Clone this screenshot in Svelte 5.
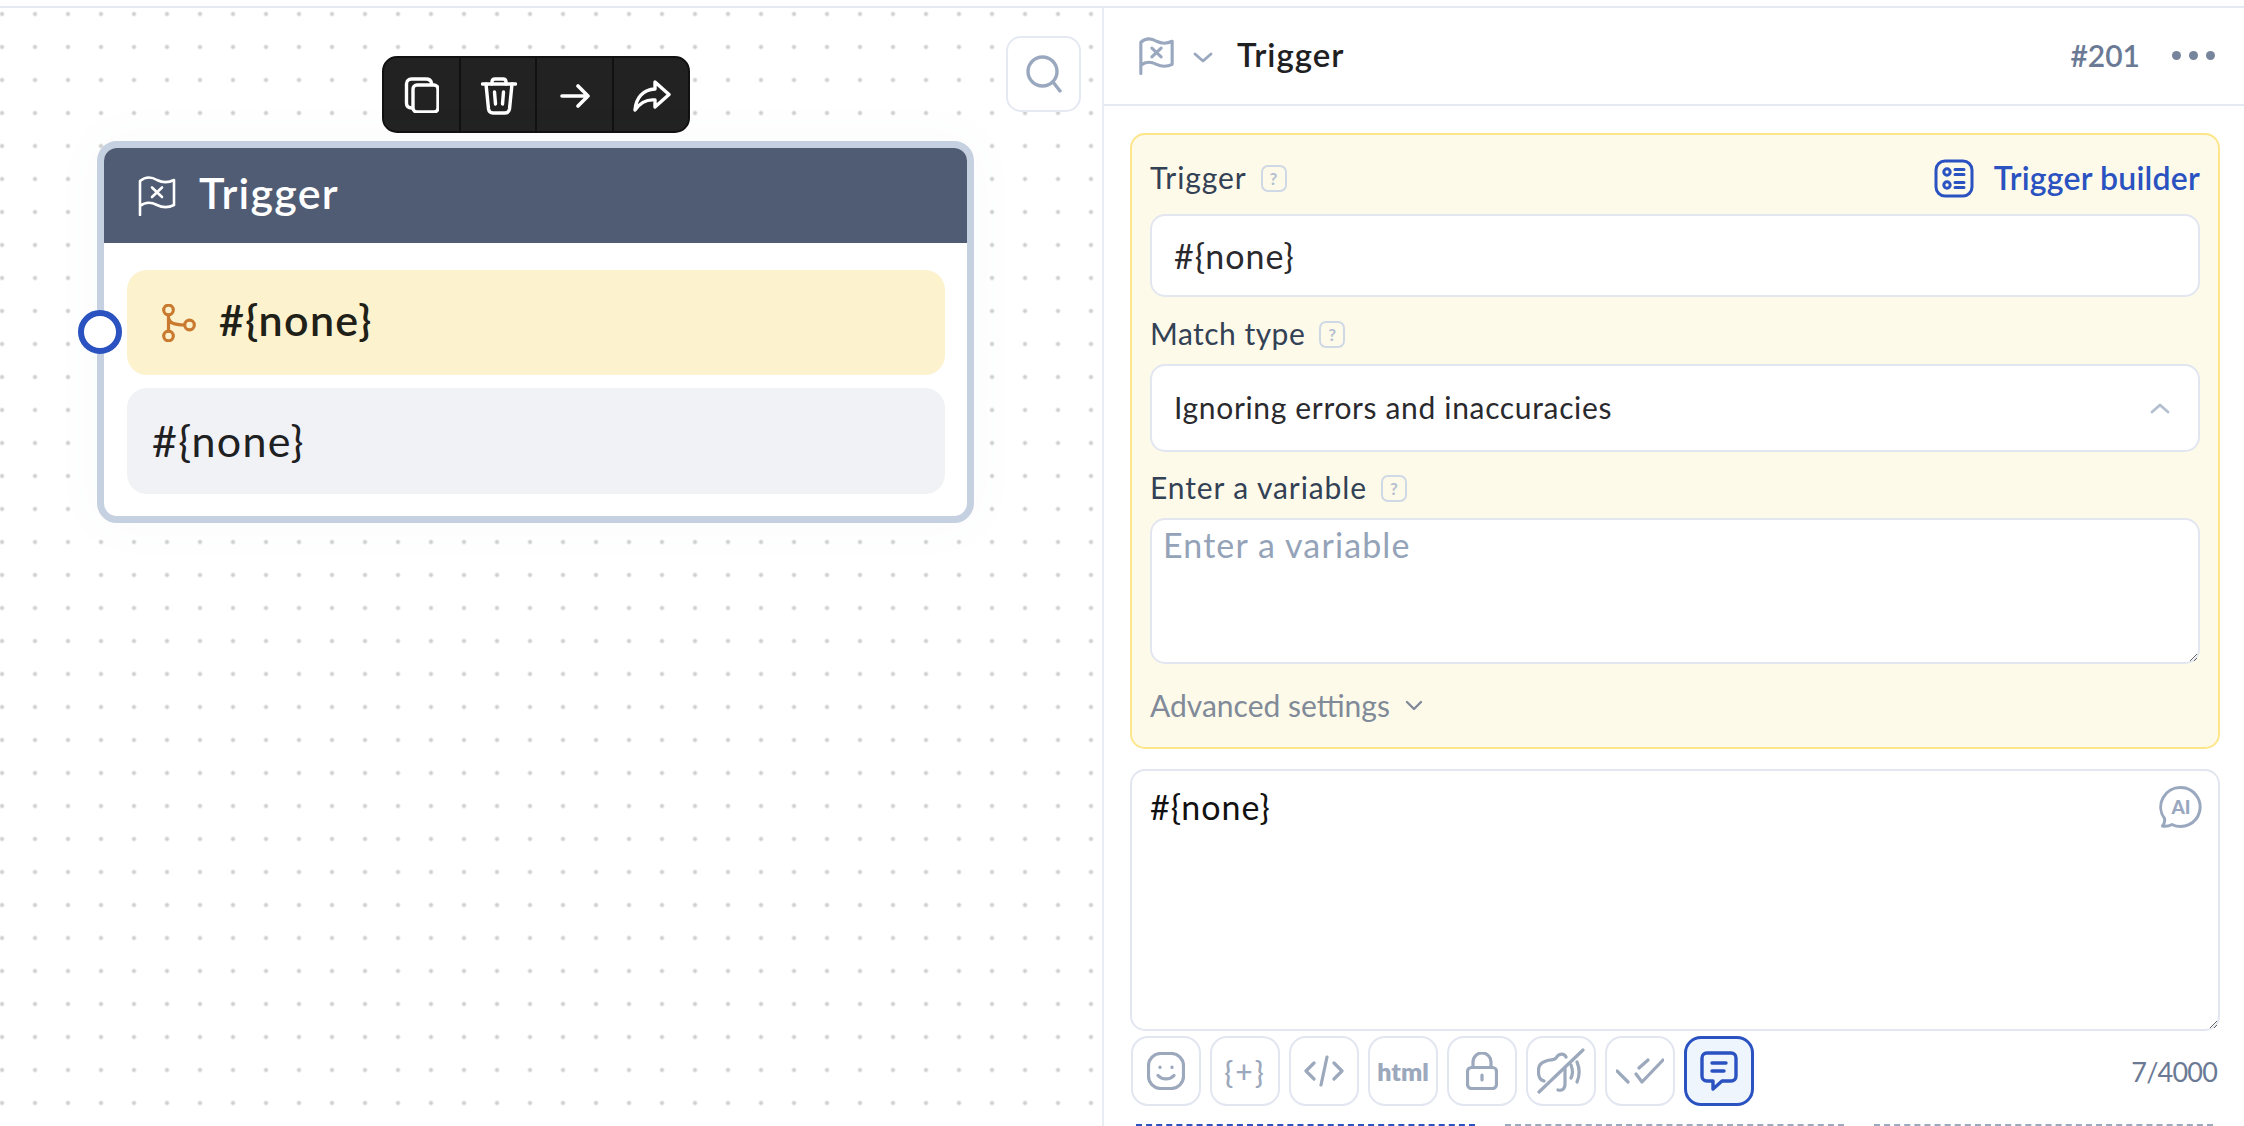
<script>
  const tools = ['copy', 'trash', 'arrow', 'share'];
  const fields = { trigger: '#{none}', match: 'Ignoring errors and inaccuracies', placeholder: 'Enter a variable' };
</script>

{#snippet flag(w, h, sw)}
  <svg width={w} height={h} viewBox="0 0 38 40" fill="none" stroke="currentColor" stroke-width={sw} stroke-linecap="round" stroke-linejoin="round">
    <path d="M2 39V5C8 0 14 1 19 4C25 7 30 7 36 4V29C30 32 25 32 19 29C13 26 7 26 2 30" />
    <path d="M14 11.500L24 21M24 11.500L14 21" />
  </svg>
{/snippet}

{#snippet help()}
  <span class="help">?</span>
{/snippet}

<div class="page">
  <div class="main">
    <section class="canvas">
      <button class="search" aria-label="Search">
        <svg width="36" height="38" viewBox="0 0 36 38" fill="none" stroke="#9aa8bf" stroke-width="3.400" stroke-linecap="round">
          <circle cx="16.500" cy="16.500" r="14.500" />
          <path d="M27 27L34 36" />
        </svg>
      </button>

      <div class="tools">
        {#each tools as t}
          <div class="tool">
            {#if t === 'copy'}
              <svg class="i-copy" width="36" height="36" viewBox="0 0 36 36" fill="none" stroke="#fff" stroke-width="3.400" stroke-linejoin="round" stroke-linecap="round">
                <path d="M9 31C5 31 3.500 29 3.500 26V7C3.500 4 5.500 2 8.500 2H23C26 2 28 3.500 28.500 6" />
                <rect x="10" y="8" width="25" height="27" rx="4" />
              </svg>
            {:else if t === 'trash'}
              <svg class="i-trash" width="36" height="38" viewBox="0 0 36 38" fill="none" stroke="#fff" stroke-width="3.400" stroke-linejoin="round" stroke-linecap="round">
                <path d="M1.500 7H34.500" />
                <path d="M11 7V5C11 3 12.500 2 14 2H22C23.500 2 25 3 25 5V7" />
                <path d="M5 7L7.500 32C8 35 9.500 36 12 36H24C26.500 36 28 35 28.500 32L31 7" />
                <path d="M13.500 15L14.500 27M22.500 15L21.500 27" />
              </svg>
            {:else if t === 'arrow'}
              <svg class="i-arrow" width="30" height="24" viewBox="0 0 30 24" fill="none" stroke="#fff" stroke-width="3.600" stroke-linejoin="round" stroke-linecap="round">
                <path d="M2 12H28M18 2L28 12L18 22" />
              </svg>
            {:else}
              <svg class="i-share" width="38" height="32" viewBox="0 0 38 32" fill="none" stroke="#fff" stroke-width="3.400" stroke-linejoin="round" stroke-linecap="round">
                <path d="M22 2L36 14.500L22 27V20C13 19 7 23 2 30C3 18 10 9.500 22 9Z" />
              </svg>
            {/if}
          </div>
        {/each}
      </div>

      <div class="node">
        <div class="handle"></div>
        <header class="node-head">
          {@render flag(38, 40, 2.600)}
          <span>Trigger</span>
        </header>
        <div class="node-body">
          <div class="row yellow">
            <svg width="34" height="38" viewBox="0 0 34 38" fill="none" stroke="#c97a2e" stroke-width="3.200" stroke-linecap="round">
              <circle cx="6.500" cy="6" r="4.800" />
              <circle cx="6.500" cy="32" r="4.800" />
              <circle cx="27.500" cy="21" r="4.800" />
              <path d="M6.500 11V27M6.500 14C7 19 12 20.500 22.500 21" />
            </svg>
            <span>#&#123;none&#125;</span>
          </div>
          <div class="row grey"><span>#&#123;none&#125;</span></div>
        </div>
      </div>
    </section>

    <aside class="panel">
      <header class="panel-head">
        <span class="head-flag">{@render flag(35, 38, 3.400)}</span>
        <svg class="head-chev" width="20" height="11" viewBox="0 0 20 11" fill="none" stroke="#9aa8bf" stroke-width="2.800" stroke-linecap="round" stroke-linejoin="round"><path d="M2 2L10 9L18 2" /></svg>
        <span class="head-title">Trigger</span>
        <span class="head-id">#201</span>
        <span class="head-dots"><i></i><i></i><i></i></span>
      </header>

      <div class="panel-body">
        <div class="settings">
          <div class="label-row">
            <span class="lbl">Trigger</span>
            {@render help()}
            <span class="builder">
              <svg width="40" height="39" viewBox="0 0 40 39" fill="none" stroke="#2a52c0" stroke-width="3" stroke-linecap="round">
                <rect x="2" y="2" width="36" height="35" rx="9" />
                <circle cx="13" cy="13" r="3.200" />
                <circle cx="13" cy="26" r="3.200" />
                <path d="M21 10.500H30M21 15.500H30M21 23.500H30M21 28.500H30" />
              </svg>
              <span class="builder-text">Trigger builder</span>
            </span>
          </div>
          <input class="field one" value={fields.trigger} />

          <div class="label-row two"><span class="lbl tight">Match type</span>{@render help()}</div>
          <div class="field select">
            <span class="sel-text">{fields.match}</span>
            <svg width="20" height="11" viewBox="0 0 20 11" fill="none" stroke="#b4bfd0" stroke-width="2.800" stroke-linecap="round" stroke-linejoin="round"><path d="M2 9L10 2L18 9" /></svg>
          </div>

          <div class="label-row three"><span class="lbl">Enter a variable</span>{@render help()}</div>
          <textarea class="field area" placeholder={fields.placeholder}></textarea>

          <div class="advanced">
            <span>Advanced settings</span>
            <svg width="18" height="11" viewBox="0 0 18 11" fill="none" stroke="#808a98" stroke-width="2.400" stroke-linecap="round" stroke-linejoin="round"><path d="M2 2L9 9L16 2" /></svg>
          </div>
        </div>

        <div class="editor">
          <textarea class="editor-text" value={fields.trigger}></textarea>
          <svg class="ai" width="44" height="44" viewBox="0 0 44 44" fill="none" stroke="#9aa8bf" stroke-width="3" stroke-linejoin="round">
            <path d="M22 2.500A19.500 19.500 0 1 1 13 39.500C10 41 6.500 41.500 3.500 41C5.500 38.500 6 36 5.500 33.500A19.500 19.500 0 0 1 22 2.500Z" />
            <text x="22" y="28.500" text-anchor="middle" class="ai-text">AI</text>
          </svg>
        </div>

        <div class="actions">
          <button class="act" aria-label="Emoji">
            <svg width="38" height="38" viewBox="0 0 38 38" fill="none" stroke="#9ca8bc" stroke-width="3.200" stroke-linecap="round">
              <rect x="1.500" y="1.500" width="35" height="35" rx="12" />
              <path d="M13 15V15.500M25 15V15.500M11 23.500C15 28 23 28 27 23.500" />
            </svg>
          </button>
          <button class="act braces">&#123;+&#125;</button>
          <button class="act" aria-label="Code">
            <svg width="40" height="32" viewBox="0 0 40 32" fill="none" stroke="#9ca8bc" stroke-width="3.200" stroke-linecap="round" stroke-linejoin="round">
              <path d="M10 8L2 16L10 24M30 8L38 16L30 24M23 2L17 30" />
            </svg>
          </button>
          <button class="act html">html</button>
          <button class="act" aria-label="Lock">
            <svg width="32" height="38" viewBox="0 0 32 38" fill="none" stroke="#9ca8bc" stroke-width="3.200" stroke-linecap="round">
              <rect x="1.500" y="15.500" width="29" height="21" rx="4" />
              <path d="M7 15V10A9 9 0 0 1 25 10V15M16 23V28" />
            </svg>
          </button>
          <button class="act" aria-label="Sound off">
            <svg width="48" height="46" viewBox="0 0 48 46" fill="none" stroke="#9ca8bc" stroke-width="3.200" stroke-linecap="round" stroke-linejoin="round">
              <path d="M2 44L46 2" />
              <path d="M29 9C27 5 22 5 19 10C17 13 14 11 9 13C3 15 1 18 1.500 25C2 31 4 32 7 33M21 42C25 43 28 41 28 36V20" />
              <path d="M34 17C36 22 36 26 34 30M40 14C43 21 43 27 40 34" />
            </svg>
          </button>
          <button class="act" aria-label="Read">
            <svg width="48" height="26" viewBox="0 0 48 26" fill="none" stroke="#9ca8bc" stroke-width="3.200" stroke-linecap="round" stroke-linejoin="round">
              <path d="M1 13L12 24M20 16L26 24L47 2M23 10L32 2" />
            </svg>
          </button>
          <button class="act on" aria-label="Comment">
            <svg width="38" height="40" viewBox="0 0 38 40" fill="none" stroke="#2a52c0" stroke-width="3.400" stroke-linecap="round" stroke-linejoin="round">
              <path d="M7 2H31C34 2 36 4 36 7V25C36 28 34 30 31 30H22L13 38V30H7C4 30 2 28 2 25V7C2 4 4 2 7 2Z" />
              <path d="M12 12H26M12 20H24" />
            </svg>
          </button>
          <span class="count">7/4000</span>
        </div>

        <div class="tabs">
          <div class="tab active"></div>
          <div class="tab"></div>
          <div class="tab"></div>
        </div>
      </div>
    </aside>
  </div>
</div>

<style>
  :global(body) { margin: 0; background: #fff; }
  .page {
    width: 2244px;
    height: 1126px;
    overflow: hidden;
    padding-top: 6px;
    box-sizing: border-box;
    font-family: "Lato", "Noto Sans", sans-serif;
    color: #1f2022;
  }
  .main {
    display: flex;
    height: 1120px;
    border-top: 2px solid #e4e9f2;
    box-sizing: border-box;
  }
  .canvas {
    position: relative;
    width: 1102px;
    flex: none;
    background-image: radial-gradient(circle, #d0d0d0 0, #d0d0d0 1.700px, transparent 2.500px);
    background-size: 33px 33px;
    background-position: -14.500px -10.500px;
  }
  .search {
    position: absolute;
    left: 1006px;
    top: 28px;
    width: 75px;
    height: 76px;
    box-sizing: border-box;
    border: 2px solid #e4e9f2;
    border-radius: 15px;
    background: #fff;
    padding: 0;
    display: flex;
    align-items: center;
    justify-content: center;
  }
  .tools {
    position: absolute;
    left: 382px;
    top: 48px;
    width: 308px;
    height: 77px;
    display: flex;
    box-sizing: border-box;
    background: #222;
    border: 2px solid #111;
    border-radius: 15px;
    overflow: hidden;
  }
  .tool {
    flex: 1;
    display: flex;
    align-items: center;
    justify-content: center;
    border-right: 2px solid #111;
  }
  .tool:last-child { border-right: 0; }
  .i-trash, .i-arrow, .i-share { margin-left: 2px; margin-top: 2px; }

  .node {
    position: absolute;
    left: 97px;
    top: 133px;
    width: 877px;
    height: 382px;
    box-sizing: border-box;
    border: 7px solid #c5d0e0;
    border-radius: 20px;
    background: #fff;
    box-shadow: 0 0 50px rgba(100, 116, 139, 0.04);
  }
  .handle {
    position: absolute;
    left: -26px;
    top: 162px;
    width: 44px;
    height: 44px;
    box-sizing: border-box;
    border: 6px solid #2a52c0;
    border-radius: 50%;
    background: #fff;
    z-index: 1;
  }
  .node-head {
    display: flex;
    align-items: center;
    gap: 23px;
    height: 95px;
    padding-left: 34px;
    background: #505c73;
    border-radius: 13px 13px 0 0;
    color: #fff;
    font-size: 43px;
    letter-spacing: 0.03em;
    font-weight: 600;
  }
  .node-head span, .row span { padding-bottom: 7px; }
  .node-body {
    display: flex;
    flex-direction: column;
    gap: 13px;
    padding: 27px 22px 0 23px;
  }
  .row {
    display: flex;
    align-items: center;
    height: 105px;
    border-radius: 20px;
    padding-left: 26px;
    font-size: 43px;
    letter-spacing: 0.03em;
  }
  .yellow { background: #fcf2cd; gap: 23px; padding-left: 35px; font-weight: 600; }
  .yellow span { color: #1f2017; }
  .grey { background: #f0f2f6; height: 106px; }
  .grey span { padding-bottom: 2px; margin-left: -1px; }

  .panel {
    flex: 1;
    min-width: 0;
    border-left: 2px solid #e8ecf3;
    display: flex;
    flex-direction: column;
  }
  .panel-head {
    display: flex;
    align-items: center;
    height: 96px;
    flex: none;
    border-bottom: 2px solid #e4e9f2;
    padding-left: 35px;
    padding-right: 29px;
  }
  .head-flag { color: #9aa8bf; display: flex; }
  .head-chev { margin-left: 19px; margin-top: 2px; }
  .head-title { margin-left: 24px; padding-bottom: 5px; font-size: 33px; letter-spacing: 0.03em; font-weight: 600; color: #1f2022; }
  .head-id { margin-left: auto; padding-bottom: 3px; font-size: 30px; font-weight: 600; color: #6b7a94; }
  .head-dots { display: flex; gap: 8px; margin-left: 32px; margin-bottom: 2px; }
  .head-dots i { width: 9px; height: 9px; border-radius: 50%; background: #76849c; }

  .panel-body { padding: 27px 24px 0 26px; }
  .settings {
    box-sizing: border-box;
    height: 616px;
    padding: 24px 18px 0;
    background: #fefaea;
    border: 2px solid #fde68a;
    border-radius: 15px;
  }
  .label-row {
    display: flex;
    align-items: center;
    height: 38px;
    font-size: 30px;
    color: #334155;
  }
  .lbl { letter-spacing: 0.03em; padding-bottom: 2px; }
  .lbl.tight { letter-spacing: 0.016em; }
  .label-row.two { margin-top: 18px; }
  .label-row.three { margin-top: 17px; }
  .help {
    display: inline-flex;
    align-items: center;
    justify-content: center;
    width: 26px;
    height: 27px;
    box-sizing: border-box;
    margin-left: 14px;
    border: 2.500px solid #cfd8e5;
    border-radius: 7px;
    font-size: 17px;
    font-weight: 700;
    color: #b4bfd0;
  }
  .builder {
    margin-left: auto;
    display: flex;
    align-items: center;
    gap: 20px;
    font-size: 32px;
    letter-spacing: 0.006em;
    font-weight: 600;
    color: #2a52c0;
  }
  .builder svg { margin-top: 1px; }
  .builder-text { padding-bottom: 2px; }
  .field {
    display: block;
    width: 100%;
    box-sizing: border-box;
    border: 2px solid #e2e6f0;
    border-radius: 15px;
    background: #fff;
    font-family: inherit;
    color: #2a2a2e;
    outline: none;
  }
  .one { height: 83px; margin-top: 17px; padding: 0 22px; font-size: 34px; letter-spacing: 0.03em; }
  .select {
    display: flex;
    align-items: center;
    justify-content: space-between;
    height: 88px;
    margin-top: 11px;
    padding: 0 28px 0 22px;
    font-size: 30px;
    letter-spacing: 0.022em;
  }
  .sel-text { padding-bottom: 2px; }
  .area {
    height: 146px;
    margin-top: 11px;
    padding: 4px 11px;
    font-size: 34px;
    letter-spacing: 0.033em;
    resize: vertical;
  }
  .area::placeholder { color: #94a3b8; opacity: 1; }
  .advanced {
    display: flex;
    align-items: center;
    gap: 15px;
    margin-top: 22px;
    height: 38px;
    font-size: 30px;
    color: #808a98;
  }

  .editor { position: relative; margin-top: 20px; height: 262px; }
  .editor-text {
    display: block;
    width: 100%;
    height: 262px;
    box-sizing: border-box;
    border: 2px solid #e2e6f0;
    border-radius: 15px;
    padding: 15px 18px;
    font-family: inherit;
    font-size: 34px;
    letter-spacing: 0.03em;
    color: #111;
    background: #fff;
    outline: none;
    resize: vertical;
  }
  .ai { position: absolute; right: 17px; top: 16px; }
  .ai-text { font-size: 19px; font-weight: 900; fill: #9aa8bf; stroke: none; font-family: "Lato", sans-serif; }

  .actions { display: flex; align-items: center; gap: 9px; margin-top: 5px; margin-left: 1px; height: 70px; }
  .act {
    width: 70px;
    height: 70px;
    flex: none;
    box-sizing: border-box;
    padding: 0;
    display: flex;
    align-items: center;
    justify-content: center;
    border: 2px solid #e2e6f0;
    border-radius: 17px;
    background: #fff;
    font-family: inherit;
    color: #9ca8bc;
  }
  .braces { font-size: 30px; font-weight: 500; letter-spacing: 2px; }
  .html { font-size: 25px; font-weight: 800; }
  .on { background: #eff5fd; border: 3px solid #2a52c0; }
  .count { margin-left: auto; margin-right: 3px; font-size: 27px; letter-spacing: -0.8px; color: #6b7a94; }

  .tabs { display: flex; gap: 30px; margin-top: 18px; padding: 0 7px 0 6px; }
  .tab { flex: 1; height: 0; border-top: 2px dashed #9ca8bc; }
  .tab.active { border-top-color: #2a52c0; }
</style>
